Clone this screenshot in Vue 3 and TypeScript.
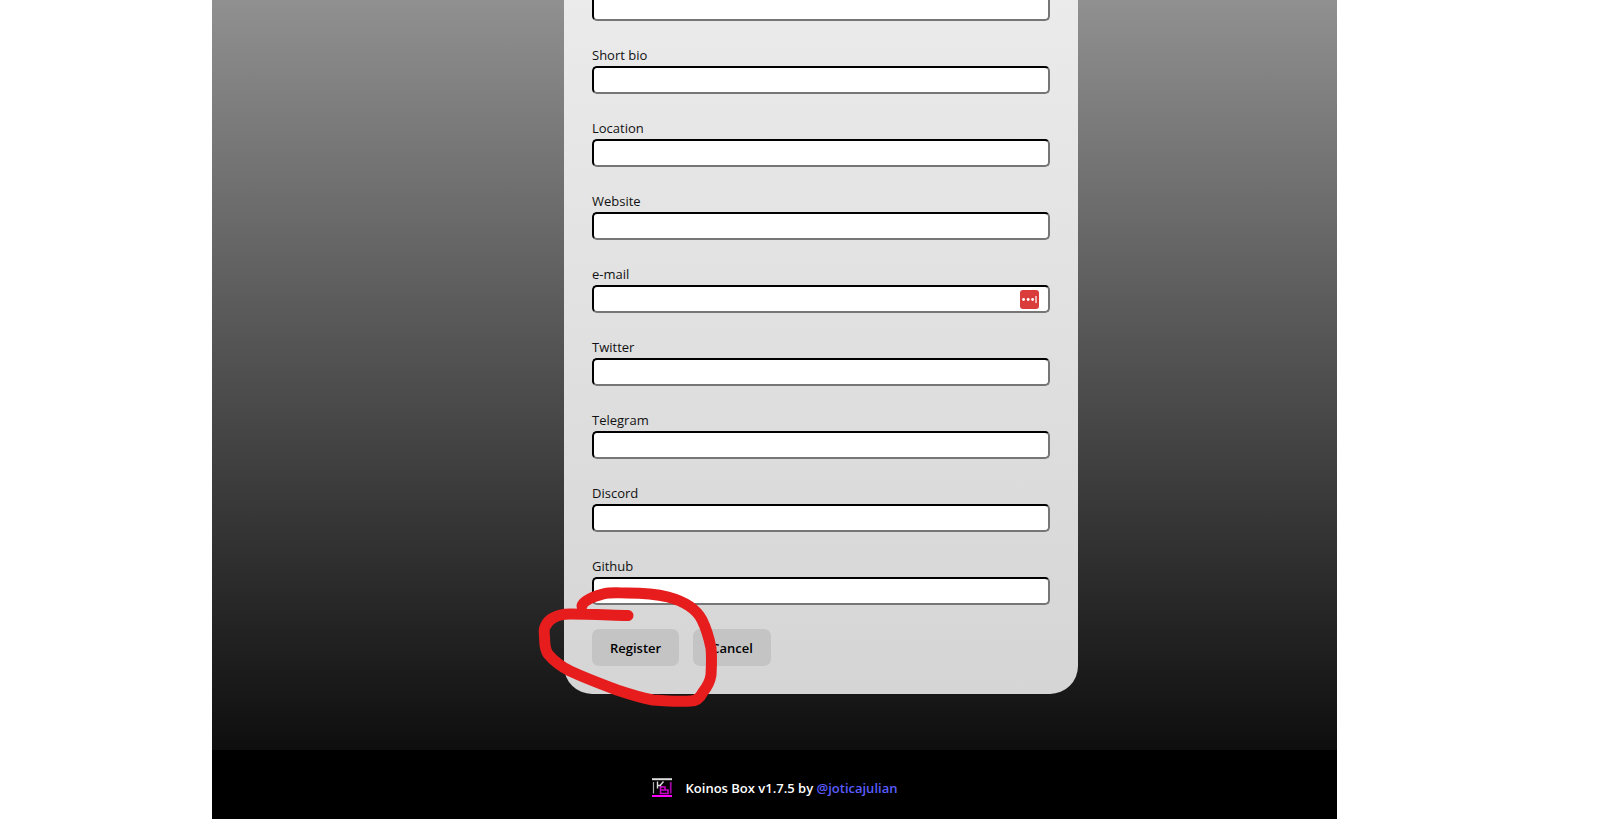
<script setup lang="ts">
import { reactive } from 'vue'

interface Field {
  id: string
  label: string
  type: string
}

const fields: Field[] = [
  { id: 'bio', label: 'Short bio', type: 'text' },
  { id: 'location', label: 'Location', type: 'text' },
  { id: 'website', label: 'Website', type: 'text' },
  { id: 'email', label: 'e-mail', type: 'email' },
  { id: 'twitter', label: 'Twitter', type: 'text' },
  { id: 'telegram', label: 'Telegram', type: 'text' },
  { id: 'discord', label: 'Discord', type: 'text' },
  { id: 'github', label: 'Github', type: 'text' },
]

const profile = reactive<Record<string, string>>({ name: '' })
</script>

<template>
  <div class="page">
    <div class="app">
      <main class="content">
        <form class="card" @submit.prevent>
          <input id="name" v-model="profile.name" class="box" type="text" aria-label="Name" />
          <div v-for="field in fields" :key="field.id" class="field">
            <label :for="field.id">{{ field.label }}</label>
            <input :id="field.id" v-model="profile[field.id]" class="box" :type="field.type" />
            <svg v-if="field.id === 'email'" class="vault" viewBox="0 0 19 19" aria-hidden="true">
              <rect width="19" height="19" rx="3" fill="#d93c3a" />
              <circle cx="3.6" cy="9.5" r="1.4" fill="#fff" />
              <circle cx="8.2" cy="9.5" r="1.4" fill="#fff" />
              <circle cx="12.6" cy="9.5" r="1.4" fill="#fff" />
              <rect x="15.4" y="6" width="1.2" height="7" fill="#fff" />
            </svg>
          </div>
          <div class="actions">
            <button type="submit">Register</button>
            <button type="button">Cancel</button>
            <svg class="marker" viewBox="532 580 190 130" aria-hidden="true">
              <path
                d="M582 606 C583 601 592 597 603 594 C611 592 619 593 627 593 C641 593 656 594 668 597 C683 601 696 608 702 620 C707 630 709 638 711 648 C712 657 711.5 666 711 675 C710 682 707 687 703 692 C700 698 696 701 691 701 C678 702 665 701 653 700 C641 698 629 694 617 690 C601 684 585 678 570 671 C562 667 553 660 548 654 C544 648 545 642 544.5 637 C544 632 544 629 545 627 C547 622 549 620 553 618 C558 615 564 614 570 614 C589 614 609 615 628 615.5"
              />
            </svg>
          </div>
        </form>
      </main>
      <footer class="footer">
        <svg class="logo" viewBox="0 0 20 20" fill="none" aria-hidden="true">
          <path d="M0 1.2H20" stroke="#ddd" stroke-width="2" />
          <path d="M1.5 4V15.5" stroke="#aaa" stroke-width="1.2" />
          <path d="M5.5 3.5V10.5M5.5 7.5H8L11.5 3.5M8 7.5L9.5 9" stroke="#ddd" stroke-width="1.4" />
          <path d="M8.5 9H13V12H16V15.5H8.5ZM8.5 12H13" stroke="#c800c8" stroke-width="1.6" />
          <path d="M18.7 4V15.5" stroke="#a000a5" stroke-width="1.8" />
          <path d="M0 18H20" stroke="#f0f" stroke-width="2" />
        </svg>
        <span>Koinos Box v1.7.5 by <a href="#joticajulian">@joticajulian</a></span>
      </footer>
    </div>
  </div>
</template>

<style>
body {
  background: #fff;
}
</style>

<style scoped>
.page {
  display: grid;
  grid-template-columns: 212fr 1125fr 263fr;
  min-height: 100vh;
  overflow: hidden;
  font-family: 'Segoe UI', 'Open Sans', 'Noto Sans', sans-serif;
  font-size: 13px;
  line-height: 20px;
  color: #111;
}
.app {
  grid-column: 2;
  display: flex;
  flex-direction: column;
}
.content {
  display: grid;
  grid-template-columns: 352fr 514fr 259fr;
  padding-bottom: 56px;
  background: linear-gradient(#909090, #0e0e0e);
}
.card {
  grid-column: 2;
  box-sizing: border-box;
  margin-top: -7px;
  padding: 0 28px 28px;
  border-radius: 0 0 28px 28px;
  background: linear-gradient(#ebebeb, #d5d5d5);
}
.field {
  position: relative;
  margin-top: 24px;
}
.field label {
  display: block;
  padding-bottom: 1px;
}
.box {
  display: block;
  box-sizing: border-box;
  width: 100%;
  height: 28px;
  padding: 0 8px;
  border: 2px inset #767676;
  border-color: #111 #767676 #767676 #111;
  border-radius: 5px;
  background: #fff;
  font: inherit;
}
.vault {
  position: absolute;
  right: 11px;
  bottom: 4px;
  width: 19px;
  height: 19px;
}
.actions {
  position: relative;
  display: flex;
  gap: 14px;
  margin-top: 24px;
}
.actions button {
  height: 37px;
  padding: 0 18px;
  border: 0;
  border-radius: 7px;
  background: #c4c4c4;
  color: #000;
  font: inherit;
  font-weight: 600;
}
.marker {
  position: absolute;
  left: -60px;
  top: -49px;
  width: 190px;
  height: 130px;
  pointer-events: none;
}
.marker path {
  fill: none;
  stroke: #e71d1d;
  stroke-width: 11;
  stroke-linecap: round;
  stroke-linejoin: round;
}
.footer {
  flex: 1;
  display: flex;
  align-items: center;
  justify-content: center;
  gap: 14px;
  padding: 27px 0 20px;
  background: #000;
  color: #fff;
  font-weight: 600;
}
.logo {
  width: 20px;
  height: 20px;
}
.footer a {
  color: #5a5cff;
  text-decoration: none;
}
</style>
